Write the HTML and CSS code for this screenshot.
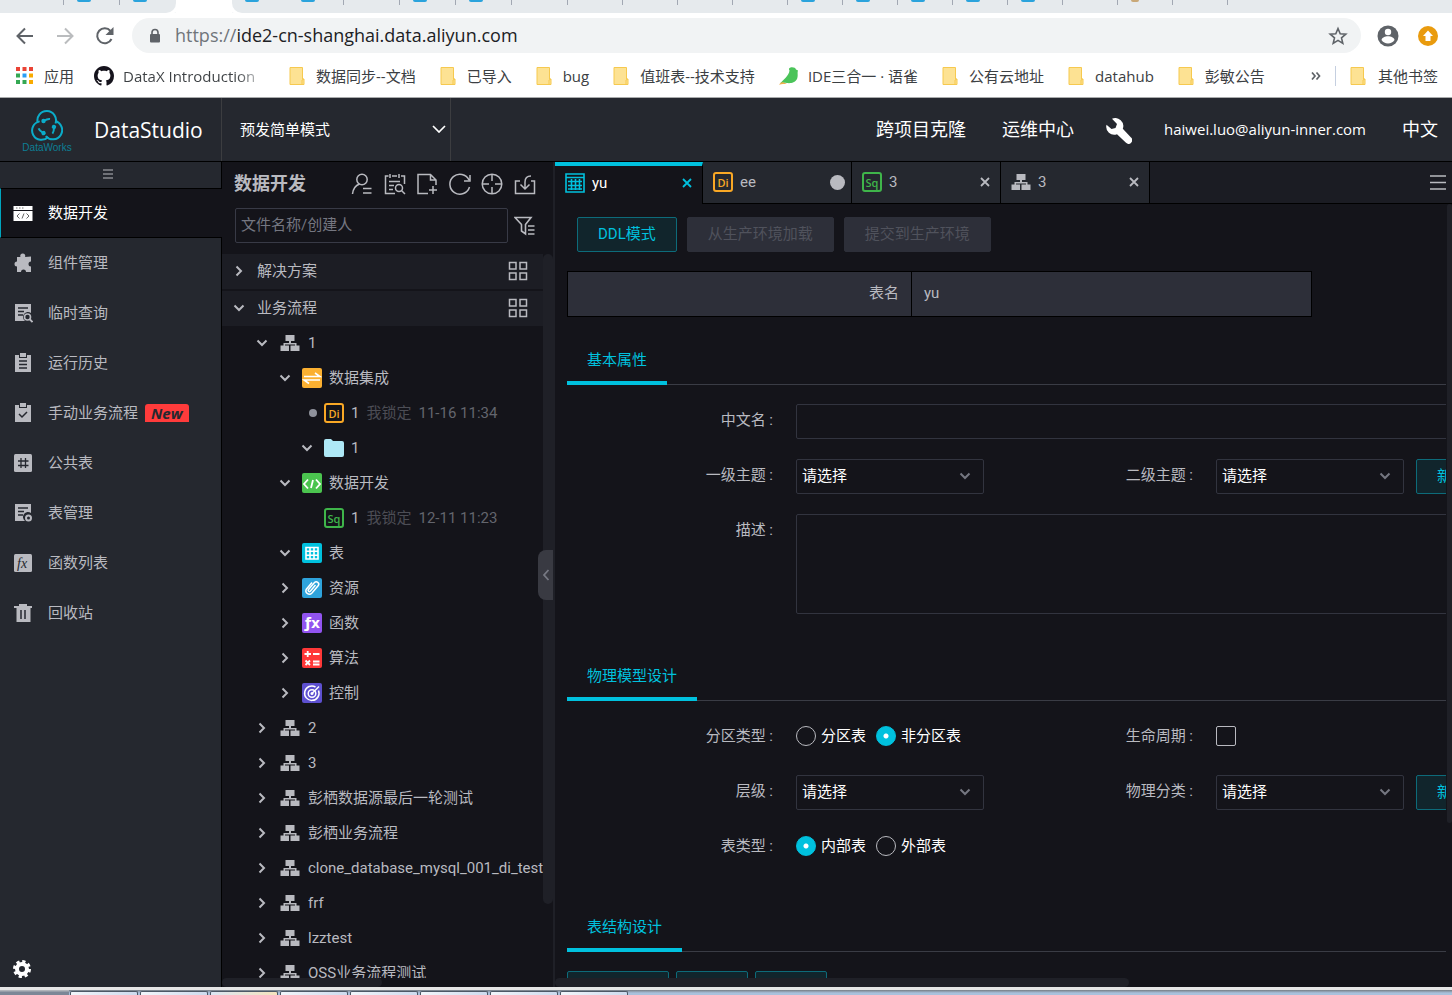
FILE: index.html
```
<!DOCTYPE html>
<html lang="zh-CN">
<head>
    <meta charset="UTF-8">
    <meta name="viewport" content="width=device-width, initial-scale=1.0">
    <title>DataStudio</title>
    <link rel="stylesheet" href="styles.css">
</head>
<body>
    <!-- shared icons -->
    <svg class="sprite" width="0" height="0" aria-hidden="true">
        <symbol id="i-folder" viewBox="0 0 16 18">
            <path d="M1 .5h12.500v11.500h1.500v5.500H1z" fill="#fde293" stroke="#f6c94f"/>
            <path d="M13 17.500v-4.500l2-1" fill="none" stroke="#f6c94f"/>
        </symbol>
        <symbol id="i-right" viewBox="0 0 14 14">
            <path d="M4.500 2.500L9 7l-4.500 4.500" fill="none" stroke="currentColor" stroke-width="2"/>
        </symbol>
        <symbol id="i-down" viewBox="0 0 14 14">
            <path d="M2.500 4.500L7 9l4.500-4.500" fill="none" stroke="currentColor" stroke-width="2"/>
        </symbol>
        <symbol id="i-flow" viewBox="0 0 20 18">
            <path d="M5.500 1h9v6h-3.500v2h5.500v2.500h3v5.500h-9v-5.500h4.500v-1h-10v1h4v5.500H.500v-5.500h3V9H9V7H5.500z" fill="#b9bac0"/>
        </symbol>
        <symbol id="i-grid" viewBox="0 0 20 20">
            <path d="M1.500 1.500h6.500v6.500H1.500zM12 1.500h6.500v6.500H12zM1.500 12h6.500v6.500H1.500zM12 12h6.500v6.500H12z" fill="none" stroke="#b9bac0" stroke-width="1.500"/>
        </symbol>
        <symbol id="i-close" viewBox="0 0 10 10">
            <path d="M1 1l8 8M9 1L1 9" fill="none" stroke="currentColor" stroke-width="1.800"/>
        </symbol>
    </svg>

    <div class="tabstrip">
        <div class="btab"></div>
        <div class="btab"><i class="fav"></i></div>
        <div class="btab before"><i class="fav"></i></div>
        <div class="btab active"></div>
        <div class="btab after"><i class="fav"></i></div>
        <div class="btab"><i class="fav"></i></div>
        <div class="btab"></div>
        <div class="btab"><i class="fav"></i></div>
        <div class="btab"><i class="fav"></i></div>
        <div class="btab"></div>
        <div class="btab"></div>
        <div class="btab"></div>
        <div class="btab"></div>
        <div class="btab"></div>
        <div class="btab"><i class="fav"></i></div>
        <div class="btab"><i class="fav"></i></div>
        <div class="btab"><i class="fav"></i></div>
        <div class="btab"><i class="fav"></i></div>
        <div class="btab"><i class="fav"></i></div>
        <div class="btab"></div>
        <div class="btab"><i class="fav tan"></i></div>
        <div class="btab"></div>
    </div>

    <div class="toolbar">
        <button class="tool-btn" aria-label="后退"><svg width="20" height="20" viewBox="0 0 20 20"><path d="M18 10H3M10 2.500L2.500 10l7.500 7.500" fill="none" stroke="#5f6368" stroke-width="2"/></svg></button>
        <button class="tool-btn" aria-label="前进"><svg width="20" height="20" viewBox="0 0 20 20"><path d="M2 10h15M10 2.500l7.500 7.500-7.500 7.500" fill="none" stroke="#babcbe" stroke-width="2"/></svg></button>
        <button class="tool-btn" aria-label="刷新"><svg width="20" height="20" viewBox="0 0 20 20"><path d="M16.500 13A7.500 7.500 0 1 1 15.500 5" fill="none" stroke="#5f6368" stroke-width="2"/><path d="M18.500 1v8h-8z" fill="#5f6368"/></svg></button>
        <div class="omnibox">
            <svg width="12" height="16" viewBox="0 0 12 16"><path d="M3 7V4.500a3 3 0 0 1 6 0V7" fill="none" stroke="#5f6368" stroke-width="1.600"/><rect x="1" y="6" width="10" height="8.500" rx="1" fill="#5f6368"/></svg>
            <span class="url"><span class="scheme">https://</span>ide2-cn-shanghai.data.aliyun.com</span>
            <svg width="20" height="20" viewBox="0 0 20 20"><path d="M10 2.500l2.200 5.300 5.600.4-4.300 3.700 1.300 5.500-4.800-3-4.800 3 1.300-5.500L2.200 8.200l5.600-.4z" fill="none" stroke="#5f6368" stroke-width="1.600"/></svg>
        </div>
        <svg class="avatar" width="22" height="22" viewBox="0 0 22 22"><circle cx="11" cy="11" r="10.500" fill="#5f6368"/><circle cx="11" cy="7" r="3.200" fill="#fff"/><path d="M4.500 15c1-5 12-5 13 0-2.500 4.500-10.500 4.500-13 0z" fill="#fff"/></svg>
        <svg width="20" height="20" viewBox="0 0 20 20"><circle cx="10" cy="10" r="10" fill="#e99b0e"/><path d="M10 4.500l5 5.500h-2.500v5h-5v-5H5z" fill="#fff"/></svg>
    </div>

    <div class="bookmarks">
        <a class="mark apps" href="#"><svg width="17" height="17" viewBox="0 0 17 17"><path d="M0 0h4v4H0zM6.500 0h4v4h-4zM13 0h4v4h-4z" fill="#ea4335"/><path d="M0 6.500h4v4H0zM0 13h4v4H0zM6.500 13h4v4h-4z" fill="#34a853"/><path d="M6.500 6.500h4v4h-4z" fill="#2a9df4"/><path d="M13 6.500h4v4h-4zM13 13h4v4h-4z" fill="#f9ab00"/></svg>应用</a>
        <a class="mark github" href="#"><svg width="20" height="20" viewBox="0 0 16 16"><path fill="#15131c" d="M8 0C3.580 0 0 3.580 0 8c0 3.540 2.290 6.530 5.470 7.590.4.070.55-.17.55-.38 0-.19-.01-.82-.01-1.490-2.010.37-2.530-.49-2.690-.94-.09-.23-.48-.94-.82-1.130-.28-.15-.68-.52-.01-.53.63-.01 1.080.58 1.230.82.72 1.210 1.870.87 2.330.66.07-.52.28-.87.51-1.070-1.780-.2-3.640-.89-3.640-3.950 0-.87.31-1.590.82-2.150-.08-.2-.36-1.020.08-2.120 0 0 .67-.21 2.200.82.64-.18 1.320-.27 2-.27s1.360.09 2 .27c1.530-1.040 2.200-.82 2.200-.82.44 1.100.16 1.920.08 2.120.51.56.82 1.270.82 2.150 0 3.070-1.870 3.750-3.650 3.950.29.25.54.73.54 1.480 0 1.070-.01 1.930-.01 2.200 0 .21.15.46.55.38A8.010 8.010 0 0 0 16 8c0-4.420-3.580-8-8-8z"/></svg><span class="fade">DataX Introduction</span></a>
        <a class="mark" href="#"><svg width="16" height="18"><use href="#i-folder"/></svg>数据同步--文档</a>
        <a class="mark" href="#"><svg width="16" height="18"><use href="#i-folder"/></svg>已导入</a>
        <a class="mark" href="#"><svg width="16" height="18"><use href="#i-folder"/></svg>bug</a>
        <a class="mark" href="#"><svg width="16" height="18"><use href="#i-folder"/></svg>值班表--技术支持</a>
        <a class="mark leaf" href="#"><svg width="20" height="18" viewBox="0 0 20 18"><path d="M10.500 3.500C9.500 2 10 .8 11.500.500c3-.5 5 .5 5.500 2l2 1c-1 2.500.5 5-1 8.500-2 4-7 4.500-10 4-3-.5-5-.5-7 .5C4 13 10 9 10.500 3.500z" fill="#4bc45a"/><path d="M0 17.800c1.500-2.300 3-3 5-2l3 .8c-3 .8-5 .4-8 1.200z" fill="#efb04c"/></svg>IDE三合一 · 语雀</a>
        <a class="mark" href="#"><svg width="16" height="18"><use href="#i-folder"/></svg>公有云地址</a>
        <a class="mark" href="#"><svg width="16" height="18"><use href="#i-folder"/></svg>datahub</a>
        <a class="mark" href="#"><svg width="16" height="18"><use href="#i-folder"/></svg>彭敏公告</a>
        <button class="more" aria-label="更多书签"><svg width="10" height="8" viewBox="0 0 10 8"><path d="M1 .5L4 4 1 7.500M5.500.5L8.500 4l-3 3.500" fill="none" stroke="#5f6368" stroke-width="1.700"/></svg></button>
        <a class="mark other" href="#"><svg width="16" height="18"><use href="#i-folder"/></svg>其他书签</a>
    </div>

    <header class="header">
        <div class="brand">
            <div class="logo">
                <svg width="32" height="32" viewBox="0 0 32 32" fill="none" stroke="#0bacc9" stroke-width="2">
                    <g id="lobe">
                        <path d="M6.800 13A9.300 9.300 0 1 1 24.500 13.500"/>
                        <path d="M12.500 11c2.500-1.500 4-2.500 6.500-2"/>
                        <circle cx="12.500" cy="11" r="1.200" fill="#0bacc9"/>
                    </g>
                    <use href="#lobe" transform="rotate(120 16 17)"/>
                    <use href="#lobe" transform="rotate(240 16 17)"/>
                </svg>
                <span>DataWorks</span>
            </div>
            <h1>DataStudio</h1>
        </div>
        <button class="workspace">预发简单模式
            <svg width="14" height="8" viewBox="0 0 14 8"><path d="M1 1l6 6 6-6" fill="none" stroke="#fff" stroke-width="1.700"/></svg>
        </button>
        <nav class="top-nav">
            <a href="#">跨项目克隆</a>
            <a href="#">运维中心</a>
            <a class="wrench" href="#" aria-label="工具"><svg width="26" height="26" viewBox="0 0 26 26"><path d="M6 .8a8 8 0 0 1 10.800 10L25 19.500a3.600 3.600 0 0 1-5 5.300l-9-8.500A8 8 0 0 1 .5 6.800L5.500 11l4-1 1.500-4z" fill="#fff"/></svg></a>
            <a class="user" href="#">haiwei.luo@aliyun-inner.com</a>
            <a class="lang" href="#">中文</a>
        </nav>
    </header>

    <main class="workbench">
        <aside class="sidebar">
            <button class="fold" aria-label="收起菜单"><svg width="10" height="10" viewBox="0 0 10 10"><path d="M0 1h10M0 5h10M0 9h10" stroke="#b9bac0" stroke-width="1.200"/></svg></button>
            <nav class="menu">
                <a class="active" href="#"><svg width="20" height="20" viewBox="0 0 20 20"><path d="M.5 3h19v4H.5zM.5 8h19v10H.5z" fill="#fff"/><path d="M3 5h1.500M6 5h1.500M9 5h1.500" stroke="#777"/><path d="M6.500 10.500L4 13l2.500 2.500M13.500 10.500L16 13l-2.500 2.500M11 10.500l-2 5" fill="none" stroke="#666"/></svg>数据开发</a>
                <a href="#"><svg width="20" height="20" viewBox="0 0 20 20"><path d="M7.500 4a2.500 2.500 0 1 1 4.500 0l6-.5v5a2.500 2.500 0 1 0 0 5v5.500h-5a2.500 2.500 0 1 0-5 0H4v-5.500a2.500 2.500 0 1 1 0-5V4z" fill="#b9bac0"/></svg>组件管理</a>
                <a href="#"><svg width="20" height="20" viewBox="0 0 20 20"><path d="M2 1h16v9a5 5 0 0 0-6 8H2z" fill="#b9bac0"/><path d="M5 5h10M5 8.500h6M5 12h5" stroke="#25282f" stroke-width="1.300"/><circle cx="14.500" cy="14" r="3" fill="none" stroke="#b9bac0" stroke-width="1.600"/><path d="M16.500 16l3 3" stroke="#b9bac0" stroke-width="1.800"/></svg>临时查询</a>
                <a href="#"><svg width="20" height="20" viewBox="0 0 20 20"><path d="M2 2h4v3h8V2h4v17H2zM7 0h6v4H7z" fill="#b9bac0"/><path d="M6 8h8M6 11.500h8M6 15h8" stroke="#25282f" stroke-width="1.500"/></svg>运行历史</a>
                <a href="#"><svg width="20" height="20" viewBox="0 0 20 20"><path d="M2 2h4v3h8V2h4v17H2zM7 0h6v4H7z" fill="#b9bac0"/><path d="M6 11l3 3 5-5" fill="none" stroke="#25282f" stroke-width="1.500"/></svg>手动业务流程<span class="new">New</span></a>
                <a href="#"><svg width="20" height="20" viewBox="0 0 20 20"><rect x="1" y="1" width="18" height="18" rx="1.500" fill="#b9bac0"/><path d="M8 5v10M12.500 5v10M5 8h10.500M5 12.500h10.500" stroke="#25282f" stroke-width="1.300"/></svg>公共表</a>
                <a href="#"><svg width="20" height="20" viewBox="0 0 20 20"><path d="M2 1h16v9a5 5 0 0 0-6 8H2z" fill="#b9bac0"/><path d="M5 5h10M5 8.500h6M5 12h5" stroke="#25282f" stroke-width="1.300"/><circle cx="15.500" cy="15" r="2.500" fill="none" stroke="#b9bac0" stroke-width="2"/></svg>表管理</a>
                <a href="#"><svg width="20" height="20" viewBox="0 0 20 20"><rect x="1" y="1" width="18" height="18" rx="1.500" fill="#b9bac0"/><text class="fx-serif" x="4" y="15">fx</text></svg>函数列表</a>
                <a href="#"><svg width="20" height="20" viewBox="0 0 20 20"><path d="M1 3h5V1h8v2h5v2h-1.500v14h-14V5H1z" fill="#b9bac0"/><path d="M8 7v9M12 7v9" stroke="#25282f" stroke-width="1.500"/></svg>回收站</a>
            </nav>
            <button class="settings" aria-label="设置"><svg width="20" height="20" viewBox="0 0 20 20"><circle cx="10" cy="10" r="5" fill="none" stroke="#fff" stroke-width="4"/><circle cx="10" cy="10" r="7.500" fill="none" stroke="#fff" stroke-width="3" stroke-dasharray="3.200 2.690"/></svg></button>
        </aside>

        <section class="explorer">
            <div class="explorer-head">
                <h2>数据开发</h2>
                <div class="actions">
                    <svg width="22" height="22" viewBox="0 0 22 22"><circle cx="11" cy="6.500" r="5.200"/><path d="M8.500 11C4.500 12.500 2 16 1.500 21M12 15.500h8.500M12 20h8.500"/></svg>
                    <svg width="22" height="22" viewBox="0 0 22 22"><path d="M11 20.500H1.500V3h3M8 3h5M17 3h3.500v8M6 1v4M15 1v4M5 8.500h11M5 12.500h5M5 16.500h4"/><circle cx="15" cy="15" r="3.500"/><path d="M17.500 17.500l3.500 3.500"/></svg>
                    <svg width="22" height="22" viewBox="0 0 22 22"><path d="M12 20.500H2V1.500h12.500L20 7v5M14.500 1.500V7H20M17 13v8M13 17h8"/></svg>
                    <svg width="22" height="22" viewBox="0 0 22 22"><path d="M20.500 14A10 10 0 1 1 20 7M21 2v6h-6"/></svg>
                    <svg width="22" height="22" viewBox="0 0 22 22"><circle cx="11" cy="11" r="9.800"/><path d="M11 1v7M11 14v7M1 11h7M14 11h7"/></svg>
                    <svg width="22" height="22" viewBox="0 0 22 22"><path d="M6 8H1.500v12.500h19V8H17M17 3c-4 0-6 2-6 6v7M6.500 11.500L11 16l4.500-4.500"/></svg>
                </div>
            </div>
            <div class="search">
                <input type="text" placeholder="文件名称/创建人" aria-label="文件名称/创建人">
                <svg width="21" height="20" viewBox="0 0 21 20"><path d="M1 1.500h16l-5.500 7v9.500l-4-3V8.500zM14 10h6.500M14 14h6.500M14 18h6.500M1 1.500l6.500 7" fill="none" stroke="#b9bac0" stroke-width="1.600"/></svg>
            </div>
            <div class="explorer-body">
                <div class="tree">
                    <div class="group"><svg class="arrow"><use href="#i-right"/></svg>解决方案<svg class="grid-icon"><use href="#i-grid"/></svg></div>
                    <div class="group"><svg class="arrow"><use href="#i-down"/></svg>业务流程<svg class="grid-icon"><use href="#i-grid"/></svg></div>
                    <div class="node"><svg class="arrow"><use href="#i-down"/></svg><svg class="icon"><use href="#i-flow"/></svg>1</div>
                    <div class="node l2"><svg class="arrow"><use href="#i-down"/></svg><svg class="icon" viewBox="0 0 20 20"><rect width="20" height="20" rx="2" fill="#fbb031"/><path d="M2 8.500h16L13 5M18 12H2l5 3.500" fill="none" stroke="#fff" stroke-width="1.600"/></svg>数据集成</div>
                    <div class="node l3"><svg class="arrow dot" viewBox="0 0 14 14"><circle cx="13" cy="7" r="4" fill="#8f929c"/></svg><span class="chip di">Di</span>1<span class="lock">我锁定</span><span class="time">11-16 11:34</span></div>
                    <div class="node l3"><svg class="arrow"><use href="#i-down"/></svg><svg class="icon" viewBox="0 0 20 20"><path d="M0 3q0-2 2-2h5l2 2h9q2 0 2 2v12q0 2-2 2H2q-2 0-2-2z" fill="#aee8f6"/></svg>1</div>
                    <div class="node l2"><svg class="arrow"><use href="#i-down"/></svg><svg class="icon" viewBox="0 0 20 20"><rect width="20" height="20" rx="2" fill="#4bc44f"/><path d="M6 6.500L2 11l4 4.500M14 6.500l4 4.500-4 4.500M11 7l-2 8" fill="none" stroke="#fff" stroke-width="1.800"/></svg>数据开发</div>
                    <div class="node l3"><span class="arrow"></span><span class="chip sq">Sq</span>1<span class="lock">我锁定</span><span class="time">12-11 11:23</span></div>
                    <div class="node l2"><svg class="arrow"><use href="#i-down"/></svg><svg class="icon" viewBox="0 0 20 20"><rect width="20" height="20" rx="2" fill="#00c1de"/><path d="M4 4.500h12v11.500H4zM4 8.300h12M4 12.200h12M8 4.500V16M12 4.500V16" fill="none" stroke="#fff" stroke-width="1.600"/></svg>表</div>
                    <div class="node l2"><svg class="arrow"><use href="#i-right"/></svg><svg class="icon" viewBox="0 0 20 20"><rect width="20" height="20" rx="2" fill="#2ea3dc"/><path d="M13.500 7l-5 6c-1.500 1.500-3-.2-2-1.500l6-7c2-2 5.500.5 3.800 3l-6.300 7.500c-3 3-8-.5-5.500-4l5.500-6.500" fill="none" stroke="#fff" stroke-width="1.500"/></svg>资源</div>
                    <div class="node l2"><svg class="arrow"><use href="#i-right"/></svg><svg class="icon" viewBox="0 0 20 20"><rect width="20" height="20" rx="2" fill="#9254f0"/><text class="fx" x="3" y="15">ƒx</text></svg>函数</div>
                    <div class="node l2"><svg class="arrow"><use href="#i-right"/></svg><svg class="icon" viewBox="0 0 20 20"><rect width="20" height="20" rx="2" fill="#ff3838"/><path d="M2.500 6h6.500M5.700 3v6M11 6h6.500M11 13.500h6.500M11 16.500h6.500M3.500 12.500l4.500 4.500M8 12.500L3.500 17" stroke="#fff" stroke-width="1.800"/></svg>算法</div>
                    <div class="node l2"><svg class="arrow"><use href="#i-right"/></svg><svg class="icon" viewBox="0 0 20 20"><rect width="20" height="20" rx="2" fill="#5d50d0"/><g fill="none" stroke="#fff" stroke-width="1.500"><path d="M13.500 4A7.200 7.200 0 1 0 16.500 7.500"/><circle cx="10" cy="10.500" r="3.800"/><path d="M10 10.500L17 3.500"/></g><circle cx="10" cy="10.500" r="1.500" fill="#fff"/></svg>控制</div>
                    <div class="node"><svg class="arrow"><use href="#i-right"/></svg><svg class="icon"><use href="#i-flow"/></svg>2</div>
                    <div class="node"><svg class="arrow"><use href="#i-right"/></svg><svg class="icon"><use href="#i-flow"/></svg>3</div>
                    <div class="node"><svg class="arrow"><use href="#i-right"/></svg><svg class="icon"><use href="#i-flow"/></svg>彭栖数据源最后一轮测试</div>
                    <div class="node"><svg class="arrow"><use href="#i-right"/></svg><svg class="icon"><use href="#i-flow"/></svg>彭栖业务流程</div>
                    <div class="node"><svg class="arrow"><use href="#i-right"/></svg><svg class="icon"><use href="#i-flow"/></svg>clone_database_mysql_001_di_test</div>
                    <div class="node"><svg class="arrow"><use href="#i-right"/></svg><svg class="icon"><use href="#i-flow"/></svg>frf</div>
                    <div class="node"><svg class="arrow"><use href="#i-right"/></svg><svg class="icon"><use href="#i-flow"/></svg>lzztest</div>
                    <div class="node"><svg class="arrow"><use href="#i-right"/></svg><svg class="icon"><use href="#i-flow"/></svg>OSS业务流程测试</div>
                </div>
                <div class="vbar"></div>
            </div>
            <div class="hbar"></div>
            <button class="handle" aria-label="收起面板"><svg width="8" height="12" viewBox="0 0 8 12"><path d="M6.500 1L2 6l4.500 5" fill="none" stroke="#777983" stroke-width="1.800"/></svg></button>
        </section>

        <section class="editor">
            <div class="file-tabs">
                <div class="file-tab active"><svg class="icon" viewBox="0 0 20 20"><path d="M1 1h18v18H1zM1 4.500h18M3 8.500h14M3 12.500h14M6.500 6v11M10.500 6v11M14.500 6v11M3 16h14" fill="none" stroke="#00c1de" stroke-width="1.600"/></svg>yu<button class="close" aria-label="关闭 yu"><svg width="10" height="10"><use href="#i-close"/></svg></button></div>
                <div class="file-tab"><span class="chip di">Di</span>ee<span class="unsaved"></span></div>
                <div class="file-tab"><span class="chip sq">Sq</span>3<button class="close" aria-label="关闭 3"><svg width="10" height="10"><use href="#i-close"/></svg></button></div>
                <div class="file-tab"><svg class="icon"><use href="#i-flow"/></svg>3<button class="close" aria-label="关闭流程 3"><svg width="10" height="10"><use href="#i-close"/></svg></button></div>
                <button class="tab-menu" aria-label="标签列表"><svg width="16" height="15" viewBox="0 0 16 15"><path d="M0 1h16M0 7.500h16M0 14h16" stroke="#b9bac0" stroke-width="1.500"/></svg></button>
            </div>

            <div class="pane">
                <form class="canvas">
                    <div class="buttons">
                        <button type="button" class="btn">DDL模式</button>
                        <button type="button" class="btn" disabled>从生产环境加载</button>
                        <button type="button" class="btn" disabled>提交到生产环境</button>
                    </div>
                    <table class="name-table">
                        <tr><th>表名</th><td>yu</td></tr>
                    </table>

                    <div class="section">
                        <h3><span>基本属性</span></h3>
                        <div class="row wide">
                            <label for="cn-name">中文名 :</label>
                            <input type="text" id="cn-name">
                        </div>
                        <div class="row">
                            <label for="topic1">一级主题 :</label>
                            <div class="select"><select id="topic1"><option>请选择</option></select><svg><use href="#i-down"/></svg></div>
                            <label for="topic2">二级主题 :</label>
                            <div class="with-btn">
                                <div class="select"><select id="topic2"><option>请选择</option></select><svg><use href="#i-down"/></svg></div>
                                <button type="button" class="btn">新建主题</button>
                            </div>
                        </div>
                        <div class="row wide">
                            <label for="desc">描述 :</label>
                            <textarea id="desc"></textarea>
                        </div>
                    </div>

                    <div class="section">
                        <h3><span>物理模型设计</span></h3>
                        <div class="row">
                            <span class="label">分区类型 :</span>
                            <div class="radios">
                                <label><input type="radio" name="part">分区表</label>
                                <label><input type="radio" name="part" checked>非分区表</label>
                            </div>
                            <label for="life">生命周期 :</label>
                            <div class="radios"><input type="checkbox" id="life"></div>
                        </div>
                        <div class="row">
                            <label for="level">层级 :</label>
                            <div class="select"><select id="level"><option>请选择</option></select><svg><use href="#i-down"/></svg></div>
                            <label for="kind">物理分类 :</label>
                            <div class="with-btn">
                                <div class="select"><select id="kind"><option>请选择</option></select><svg><use href="#i-down"/></svg></div>
                                <button type="button" class="btn">新建层级</button>
                            </div>
                        </div>
                        <div class="row">
                            <span class="label">表类型 :</span>
                            <div class="radios">
                                <label><input type="radio" name="type" checked>内部表</label>
                                <label><input type="radio" name="type">外部表</label>
                            </div>
                        </div>
                    </div>

                    <div class="section">
                        <h3><span>表结构设计</span></h3>
                        <div class="field-buttons">
                            <button type="button" class="btn">添加字段</button>
                            <button type="button" class="btn">上移</button>
                            <button type="button" class="btn">下移</button>
                        </div>
                    </div>
                </form>
                <div class="vbar"></div>
            </div>
            <div class="hbar"></div>
        </section>
    </main>

    <div class="taskbar">
        <div class="start"></div>
        <div class="task"></div><div class="task"></div><div class="task warm"></div><div class="task"></div>
        <div class="task"></div><div class="task"></div><div class="task"></div><div class="task"></div>
    </div>
</body>
</html>
```

FILE: styles.css
```
* {
    box-sizing: border-box;
}

body {
    margin: 0;
    height: 100vh;
    display: flex;
    flex-direction: column;
    overflow: hidden;
    background: #fff;
    color: #b9bac0;
    font-family: Roboto, "Noto Sans CJK SC", sans-serif;
    font-size: 15px;
    line-height: 20px;
}

a {
    color: inherit;
    text-decoration: none;
}

button {
    background: none;
    border: none;
    padding: 0;
    color: inherit;
    font: inherit;
    cursor: pointer;
}

input,
select,
textarea {
    font: inherit;
}

svg {
    display: block;
    flex-shrink: 0;
}

h1,
h2,
h3 {
    margin: 0;
    font-weight: normal;
}

.sprite {
    position: absolute;
}

/* browser chrome */
.tabstrip {
    display: flex;
    height: 13px;
    flex-shrink: 0;
    padding-left: 8px;
    background: #e6eaed;
    overflow: hidden;
}

.btab {
    width: 56px;
    height: 5px;
    flex-shrink: 0;
    border-right: 1px solid #a2a8b3;
}

.btab:nth-child(n+11) {
    width: 55px;
}

.btab.active {
    height: 13px;
    background: #fff;
    border: none;
}

.btab.before,
.btab.after {
    height: 13px;
    border: none;
    background: #e6eaed;
    border-radius: 0 0 10px 0;
    box-shadow: 8px 0 0 #fff;
}

.btab.after {
    border-radius: 0 0 0 10px;
    box-shadow: -8px 0 0 #fff;
}

.fav {
    display: block;
    width: 14px;
    height: 2px;
    margin-left: 13px;
    border-radius: 0 0 7px 7px;
    background: #2ba3dc;
}

.fav.tan {
    width: 8px;
    background: #c9a878;
}

.toolbar {
    display: flex;
    align-items: center;
    flex-shrink: 0;
    height: 45px;
    padding: 0 14px 0 15px;
    gap: 20px;
}

.omnibox {
    display: flex;
    align-items: center;
    flex: 1;
    height: 35px;
    margin-left: -3px;
    padding: 0 13px 0 17px;
    gap: 14px;
    border-radius: 18px;
    background: #f1f3f4;
    color: #202124;
    font-family: "Open Sans", sans-serif;
    font-size: 18px;
}

.url {
    flex: 1;
    padding-bottom: 2px;
}

.scheme {
    color: #70757a;
}

.avatar {
    margin: 0 -1px 0 -4px;
}

.bookmarks {
    display: flex;
    align-items: center;
    flex-shrink: 0;
    height: 40px;
    padding: 0 14px 4px 16px;
    gap: 24px;
    border-bottom: 1px solid #a9abac;
    color: #3c4043;
    font-family: "Open Sans", "Noto Sans CJK SC", sans-serif;
    white-space: nowrap;
}

.mark {
    display: flex;
    align-items: center;
    gap: 11px;
}

.mark.apps {
    margin-right: -4px;
}

.mark.github,
.mark.leaf {
    gap: 9px;
}

.fade {
    width: 142px;
    overflow: hidden;
    background: linear-gradient(90deg, #3c4043 80%, #c5c7c9 96%);
    background-clip: text;
    color: transparent;
}

.more {
    margin-left: auto;
}

.other {
    margin-left: -10px;
    padding-left: 14px;
    gap: 12px;
    border-left: 1px solid #c5cfe0;
}

/* app header */
.header {
    display: flex;
    flex-shrink: 0;
    height: 64px;
    background: #25282f;
    border-bottom: 1px solid #000;
    color: #fff;
    font-family: "Open Sans", "Noto Sans CJK SC", sans-serif;
}

.brand {
    display: flex;
    align-items: center;
    width: 222px;
    padding-left: 21px;
    gap: 21px;
    border-right: 1px solid #3c3d40;
}

.brand h1 {
    font-size: 21px;
    font-weight: normal;
}

.logo {
    display: flex;
    flex-direction: column;
    align-items: center;
    width: 52px;
    padding-top: 4px;
    color: #0d7f95;
    font: 10px/12px "Liberation Sans", sans-serif;
}

.workspace {
    display: flex;
    align-items: center;
    justify-content: space-between;
    width: 229px;
    padding: 0 4px 1px 18px;
    border-right: 1px solid #3c3d40;
}

.top-nav {
    display: flex;
    align-items: center;
    margin-left: auto;
    padding: 0 14px 2px 0;
    gap: 36px;
    font-size: 18px;
}

.wrench {
    margin: 4px -4px 0 -4px;
}

.user {
    font-size: 15px;
}

/* left menu */
.workbench {
    display: flex;
    flex: 1;
    min-height: 0;
    background: #14141a;
}

.sidebar {
    display: flex;
    flex-direction: column;
    width: 222px;
    flex-shrink: 0;
    background: #25282f;
    border-right: 1px solid #000;
}

.fold {
    display: flex;
    align-items: center;
    justify-content: center;
    height: 26px;
    padding: 0 5px 3px 0;
}

.menu a {
    display: flex;
    align-items: center;
    height: 50px;
    padding-left: 13px;
    gap: 15px;
}

.menu a.active {
    margin-right: -1px;
    padding-left: 12px;
    border: 1px solid #000;
    border-width: 1px 0;
    border-left: 1px solid #00a5be;
    background: #14141a;
    color: #fff;
}

.new {
    margin-left: -8px;
    padding: 0 6px;
    border-radius: 3px 3px 0 0;
    background: #ff3b3b;
    color: #25282f;
    font: italic bold 15px/18px "Open Sans", sans-serif;
}

.fx-serif {
    fill: #25282f;
    font: italic 14px "Liberation Serif", serif;
}

.settings {
    margin: auto 0 8px 12px;
    align-self: flex-start;
}

/* file explorer */
.explorer {
    position: relative;
    display: flex;
    flex-direction: column;
    width: 333px;
    flex-shrink: 0;
    border-right: 2px solid #1f2027;
}

.explorer-head {
    display: flex;
    align-items: center;
    justify-content: space-between;
    height: 43px;
    flex-shrink: 0;
    padding: 0 17px 0 12px;
}

.explorer-head h2 {
    font-size: 18px;
    font-weight: bold;
}

.actions {
    display: flex;
    justify-content: space-between;
    width: 185px;
    fill: none;
    stroke: #b9bac0;
    stroke-width: 1.5;
}

.search {
    display: flex;
    align-items: center;
    flex-shrink: 0;
    margin: 3px 18px 11px 13px;
    gap: 6px;
}

.search input {
    flex: 1;
    min-width: 0;
    height: 35px;
    padding: 0 5px 2px;
    border: 1px solid #383a46;
    border-radius: 2px;
    background: none;
    color: #b9bac0;
}

.search input::placeholder {
    color: #757781;
}

.explorer-body {
    display: flex;
    flex: 1;
    min-height: 0;
}

.tree {
    flex: 1;
    min-width: 0;
    overflow: hidden;
    white-space: nowrap;
}

.group {
    display: flex;
    align-items: center;
    height: 35px;
    margin-bottom: 2px;
    padding: 0 15px 2px 10px;
    gap: 11px;
    background: #1c1d24;
}

.group + .node {
    margin-top: -2px;
}

.grid-icon {
    width: 20px;
    height: 20px;
    margin-left: auto;
}

.arrow {
    width: 14px;
    height: 14px;
    flex-shrink: 0;
    margin-right: 2px;
}

.group .arrow {
    margin: 0;
}

.dot {
    overflow: visible;
}

.icon {
    width: 20px;
    height: 20px;
}

.node {
    display: flex;
    align-items: center;
    height: 35px;
    padding: 0 0 2px 33px;
    gap: 8px;
}

.node.l2 {
    padding-left: 56px;
    gap: 7px;
}

.node.l3 {
    padding-left: 78px;
    gap: 7px;
}

.node .arrow {
    margin-right: 3px;
}

.lock {
    color: #4c4d55;
}

.time {
    color: #63656d;
}

.chip {
    width: 20px;
    height: 20px;
    flex-shrink: 0;
    border: 2px solid;
    border-radius: 3px;
    font: 600 11px/17px "Open Sans", sans-serif;
    text-align: center;
}

.chip.di {
    color: #f9a825;
}

.chip.sq {
    color: #3fb54a;
}

.fx {
    fill: #fff;
    font: bold 14px "DejaVu Sans", sans-serif;
}

.explorer .vbar {
    width: 10px;
    height: 650px;
    max-height: 90%;
    border-radius: 5px;
    background: #1f2027;
}

.hbar {
    flex-shrink: 0;
    width: 160px;
    height: 9px;
    border-radius: 5px;
    background: #1f2027;
}

.handle {
    position: absolute;
    right: 0;
    top: 388px;
    display: flex;
    align-items: center;
    justify-content: center;
    width: 15px;
    height: 50px;
    border-radius: 8px 0 0 8px;
    background: #393a42;
}

/* editor */
.editor {
    display: flex;
    flex-direction: column;
    flex: 1;
    min-width: 0;
}

.file-tabs {
    display: flex;
    height: 42px;
    flex-shrink: 0;
    background: #1b1c23;
    border-bottom: 1px solid #000;
}

.file-tab {
    display: flex;
    align-items: center;
    width: 149px;
    padding: 0 10px 1px 10px;
    gap: 7px;
    border-right: 1px solid #000;
    background: #25282f;
}

.file-tab.active {
    height: 42px;
    width: 148px;
    padding-bottom: 5px;
    border-top: 4px solid #00c1de;
    background: #14141a;
    color: #fff;
}

.close {
    margin-left: auto;
}

.active .close {
    color: #00c1de;
}

.unsaved {
    width: 15px;
    height: 15px;
    margin: 0 -4px 0 auto;
    border-radius: 50%;
    background: #b9bac0;
}

.tab-menu {
    margin: 0 6px 0 auto;
}

.pane {
    display: flex;
    flex: 1;
    min-height: 0;
}

.canvas {
    flex: 1;
    min-width: 0;
    padding: 13px 0 0 12px;
    overflow: hidden;
}

.pane .vbar {
    width: 5px;
    height: 80%;
    margin-left: 1px;
    border-radius: 3px;
    background: #1f2027;
}

.editor .hbar {
    width: 64%;
}

.buttons {
    display: flex;
    gap: 10px;
    margin-left: 10px;
}

.field-buttons {
    display: flex;
    gap: 7px;
}

.btn {
    flex-shrink: 0;
    height: 35px;
    padding: 0 20px 2px;
    border: 1px solid #0d6b7a;
    border-radius: 2px;
    background: #11252c;
    color: #00c1de;
    white-space: nowrap;
}

.btn:disabled {
    border-color: #2d2f39;
    background: #2d2f39;
    color: #50525c;
    cursor: not-allowed;
}

.name-table {
    width: 745px;
    margin: 19px 0 18px;
    border-collapse: collapse;
    table-layout: fixed;
    background: #2d2f39;
}

.name-table th,
.name-table td {
    height: 45px;
    padding: 0 12px 2px;
    border: 1px solid #000;
    font-weight: normal;
    text-align: left;
}

.name-table th {
    width: 344px;
    text-align: right;
}

.section {
    padding-bottom: 37px;
}

.section h3 {
    display: flex;
    height: 50px;
    margin-bottom: 19px;
    border-bottom: 1px solid #3a3c45;
    font-size: 15px;
}

.section h3 span {
    height: 50px;
    padding: 15px 20px 0;
    border-bottom: 4px solid #00c1de;
    color: #00c1de;
}

.row {
    display: grid;
    grid-template-columns: 229px 188px 232px 500px;
    align-items: center;
    min-height: 35px;
    margin-bottom: 20px;
}

.row:last-child {
    margin-bottom: 0;
}

.row.wide {
    grid-template-columns: 229px 920px;
    align-items: start;
}

.row > label,
.row > .label {
    padding: 0 23px 2px 0;
    line-height: 33px;
    text-align: right;
}

.row input[type="text"],
.row textarea,
.row select {
    display: block;
    width: 100%;
    height: 35px;
    margin: 0;
    padding: 0 5px 2px;
    border: 1px solid #32343f;
    border-radius: 2px;
    background: none;
    color: #fff;
    appearance: none;
}

.row textarea {
    height: 100px;
    resize: none;
}

.select {
    position: relative;
    width: 188px;
}

.select svg {
    position: absolute;
    right: 12px;
    top: 10px;
    width: 14px;
    height: 14px;
    color: #757781;
    pointer-events: none;
}

.with-btn {
    display: flex;
    gap: 12px;
}

.radios {
    display: flex;
    align-items: center;
    padding-bottom: 3px;
    gap: 10px;
    color: #fff;
    white-space: nowrap;
}

.radios label {
    display: flex;
    align-items: center;
    gap: 5px;
}

.radios input {
    width: 20px;
    height: 20px;
    margin: 0;
    border: 1px solid #b9bac0;
    border-radius: 50%;
    appearance: none;
}

.radios input[type="checkbox"] {
    border-radius: 2px;
}

.radios input:checked {
    border-color: #00c1de;
    background: radial-gradient(circle, #fff 2px, #00c1de 3px);
}

/* desktop taskbar */
.taskbar {
    display: flex;
    flex-shrink: 0;
    height: 8px;
    border-top: 3px solid #e6e6e6;
    background: linear-gradient(#777d84 0, #a9c1dc 3px);
}

.start {
    width: 69px;
    background: linear-gradient(#b0b4ba 1px, #7c8797 2px);
}

.task {
    width: 68px;
    height: 4px;
    margin: 1px 1px 0;
    border: 1px solid #4c5866;
    border-bottom: none;
    border-radius: 2px 2px 0 0;
    background: linear-gradient(90deg, #f2f6fb, #cddbee);
}

.task.warm {
    background: linear-gradient(90deg, #dbe6f3, #f5e3bd);
}
```
